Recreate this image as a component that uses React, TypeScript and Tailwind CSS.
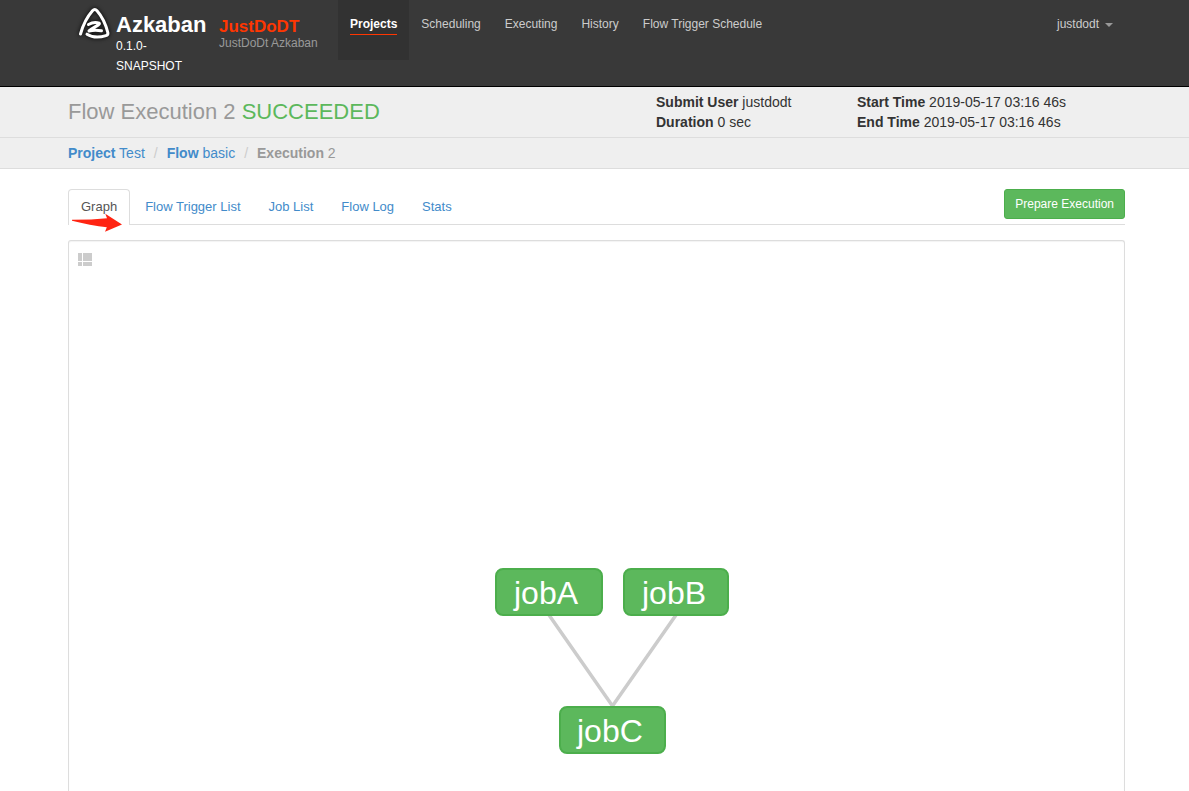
import React from 'react';

const navItems = ['Scheduling', 'Executing', 'History', 'Flow Trigger Schedule'];
const tabs = ['Flow Trigger List', 'Job List', 'Flow Log', 'Stats'];

const nodes = [
  { name: 'jobA', x: 1, y: 1, w: 106, tx: 19 },
  { name: 'jobB', x: 129, y: 1, w: 104, tx: 147 },
  { name: 'jobC', x: 65, y: 139, w: 105, tx: 82 },
];

function Logo() {
  return (
    <svg
      className="h-9 w-9 shrink-0 drop-shadow-[0_0_2px_#000000]"
      viewBox="0 0 36 36"
      fill="none"
      stroke="#ffffff"
      strokeLinecap="round"
      strokeLinejoin="round"
      aria-hidden="true"
    >
      <path
        strokeWidth="3"
        d="M4.500 30C7 21 11 13 16.500 6.800C18 5.200 19.500 5.200 21 6.800C26 12.500 29.500 19.500 31.800 28.500C32.200 30.500 31.500 31.200 30 31.600C23.500 33.600 16 33.400 11 30.200"
      />
      <path strokeWidth="3" d="M12.500 20.500C16 18.600 20 18.200 23.300 19.200C24.500 20.500 17 23.500 13 27C17 26 21.500 26 25.500 26.800" />
    </svg>
  );
}

function Header() {
  return (
    <header className="flex h-[87px] items-start border-b border-black bg-[#393939] pr-16 pl-[76px] text-xs">
      <a href="#" className="mt-1 flex w-[143px] text-white">
        <Logo />
        <span className="ml-1 block pt-[9px]">
          <span className="block text-[22px] leading-[23px] font-bold">Azkaban</span>
          <span className="block w-16 leading-5">0.1.0-SNAPSHOT</span>
        </span>
      </a>
      <div className="w-[119px] pt-[18px]">
        <div className="text-[17px] leading-[18px] font-bold text-[#ff3601]">JustDoDT</div>
        <div className="leading-[14px] text-[#999999]">JustDoDt Azkaban</div>
      </div>
      <nav className="flex grow items-start">
        <a href="#" className="h-[60px] bg-[#323232] px-3 pt-[14px] font-bold text-white">
          <span className="block border-b border-[#ff3601] leading-5">Projects</span>
        </a>
        {navItems.map((item) => (
          <a key={item} href="#" className="px-3 pt-[14px] leading-5 text-[#cccccc]">
            {item}
          </a>
        ))}
      </nav>
      <button type="button" className="flex items-center gap-[6px] px-3 pt-[14px] leading-5 text-[#cccccc]">
        justdodt
        <span className="mt-[2px] border-x-4 border-t-4 border-x-transparent border-t-[#999999]" />
      </button>
    </header>
  );
}

function Summary() {
  return (
    <>
      <section className="flex h-[51px] items-center border-b border-[#dddddd] bg-[#efefef] pl-[68px] text-sm leading-5 text-[#333333]">
        <h1 className="w-[588px] text-[22px] leading-7 text-[#999999]">
          <a href="#">
            Flow Execution 2 <span className="text-[#5cb85c]">SUCCEEDED</span>
          </a>
        </h1>
        <div className="w-[201px]">
          <p><strong>Submit User</strong> justdodt</p>
          <p><strong>Duration</strong> 0 sec</p>
        </div>
        <div>
          <p><strong>Start Time</strong> 2019-05-17 03:16 46s</p>
          <p><strong>End Time</strong> 2019-05-17 03:16 46s</p>
        </div>
      </section>
      <nav aria-label="Breadcrumb" className="border-b border-[#dddddd] bg-[#efefef] pl-[68px]">
        <ol className="flex h-[30px] items-center text-sm text-[#428bca]">
          <li><a href="#"><strong>Project</strong> Test</a></li>
          <li className="px-[9px] text-[#cccccc]">/</li>
          <li><a href="#"><strong>Flow</strong> basic</a></li>
          <li className="px-[9px] text-[#cccccc]">/</li>
          <li className="text-[#999999]"><strong>Execution</strong> 2</li>
        </ol>
      </nav>
    </>
  );
}

function Tabs() {
  return (
    <div className="flex items-start justify-between border-b border-[#dddddd] text-[13px] leading-5">
      <ul className="-mb-px flex gap-[2px]">
        <li className="relative">
          <a href="#" className="block rounded-t border border-b-0 border-[#dddddd] bg-white px-3 pt-[7px] pb-2 text-[#555555]">
            Graph
          </a>
          <svg className="absolute top-[24px] left-[3px] h-[19px] w-[52px]" viewBox="0 0 52 19" aria-hidden="true">
            <path
              fill="#ff2412"
              d="M1 6.700L20 6.500L36 5.300L34.300 0.700L51 11.500L34 18.700L35.800 14.300C26 13.500 12 10.500 1 7.800Z"
            />
          </svg>
        </li>
        {tabs.map((tab) => (
          <li key={tab}>
            <a href="#" className="block px-[13px] py-2 text-[#428bca]">{tab}</a>
          </li>
        ))}
      </ul>
      <button type="button" className="h-[30px] rounded-[3px] border border-[#4cae4c] bg-[#5cb85c] px-[10px] text-xs text-white">
        Prepare Execution
      </button>
    </div>
  );
}

function Graph() {
  return (
    <section className="relative mt-[15px] grow rounded-t-[3px] border border-b-0 border-[#dddddd] bg-white p-[9px] shadow-[inset_0_1px_1px_rgba(0,0,0,0.05)]">
      <button type="button" aria-label="Toggle job list" className="mt-[3px] block h-[14px] w-[14px] text-[#cccccc]">
        <svg viewBox="0 0 14 14" fill="currentColor" className="h-[14px] w-[14px]">
          <path d="M0 0h4v8H0zM5 0h9v8H5zM0 9h4v4H0zM5 9h9v4H5z" />
        </svg>
      </button>
      <svg className="absolute top-[327px] left-[426px] h-[190px] w-[236px]" viewBox="0 0 236 190">
        <path d="M54 47L117.500 138L181 47" fill="none" stroke="#cccccc" strokeWidth="3.500" />
        {nodes.map((node) => (
          <g key={node.name}>
            <rect x={node.x} y={node.y} width={node.w} height="46" rx="7" fill="#5cb85c" stroke="#4cae4c" strokeWidth="2" />
            <text x={node.tx} y={node.y + 35} fill="#ffffff" fontSize="32">{node.name}</text>
          </g>
        ))}
      </svg>
    </section>
  );
}

export default function App() {
  return (
    <div className="flex min-h-screen flex-col bg-white font-['Liberation_Sans',Arial,sans-serif]">
      <Header />
      <Summary />
      <main className="flex grow flex-col pt-5 pr-16 pl-[68px]">
        <Tabs />
        <Graph />
      </main>
    </div>
  );
}
